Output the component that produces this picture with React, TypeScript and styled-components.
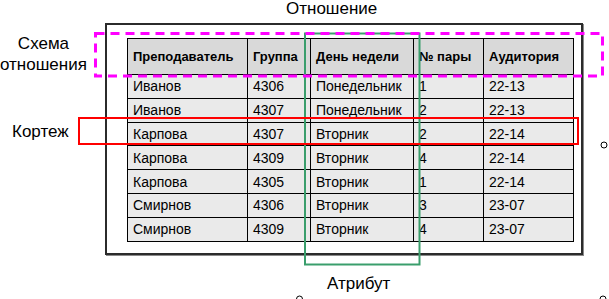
import React from 'react';
import styled, { createGlobalStyle } from 'styled-components';

const GlobalStyle = createGlobalStyle`
	html, body {
		margin: 0;
		padding: 0;
		background: #ffffff;
	}
	body {
		font-family: 'Liberation Sans', Arial, sans-serif;
		color: #000;
	}
`;

const Canvas = styled.div`
	position: relative;
	width: 609px;
	height: 299px;
	overflow: hidden;
	background: #fff;
`;

const Frame = styled.div`
	position: absolute;
	left: 105px;
	top: 23px;
	width: 478px;
	height: 232px;
	box-sizing: border-box;
	border: 2px solid #2b2b2b;
	box-shadow: 1px 1px 0 #8a8a8a;
	padding: 13px 0 0 20px;
`;

const Table = styled.table`
	border-collapse: collapse;
	table-layout: fixed;
	width: 446px;
`;

const Th = styled.th<{ $w: number }>`
	width: ${(p) => p.$w - 6}px;
	height: 35px;
	background: #d9d9d9;
	border: 1px solid #000;
	text-align: left;
	font-size: 13px;
	font-weight: bold;
	padding: 0 0 0 5px;
	white-space: nowrap;
	overflow: hidden;
`;

const Td = styled.td`
	height: 22.8px;
	background: #eaeaea;
	border: 1px solid #000;
	font-size: 14px;
	padding: 0 0 0 5px;
	white-space: nowrap;
	overflow: hidden;
`;

const Label = styled.div<{ $x: number; $y: number; $center?: boolean }>`
	position: absolute;
	left: ${(p) => p.$x}px;
	top: ${(p) => p.$y}px;
	font-size: 17px;
	line-height: 21px;
	text-align: ${(p) => (p.$center ? 'center' : 'left')};
	white-space: nowrap;
`;

const Overlay = styled.svg`
	position: absolute;
	left: 0;
	top: 0;
	pointer-events: none;
`;

const columns = [
	{ title: 'Преподаватель', w: 120 },
	{ title: 'Группа', w: 63 },
	{ title: 'День недели', w: 103 },
	{ title: '№ пары', w: 70 },
	{ title: 'Аудитория', w: 90 },
];

const rows = [
	['Иванов', '4306', 'Понедельник', '1', '22-13'],
	['Иванов', '4307', 'Понедельник', '2', '22-13'],
	['Карпова', '4307', 'Вторник', '2', '22-14'],
	['Карпова', '4309', 'Вторник', '4', '22-14'],
	['Карпова', '4305', 'Вторник', '1', '22-14'],
	['Смирнов', '4306', 'Вторник', '3', '23-07'],
	['Смирнов', '4309', 'Вторник', '4', '23-07'],
];

const App: React.FC = () => {
	return (
		<>
			<GlobalStyle />
			<Canvas>
				<Frame>
					<Table>
						<thead>
							<tr>
								{columns.map((c) => (
									<Th key={c.title} $w={c.w}>
										{c.title}
									</Th>
								))}
							</tr>
						</thead>
						<tbody>
							{rows.map((r, i) => (
								<tr key={i}>
									{r.map((v, j) => (
										<Td key={j}>{v}</Td>
									))}
								</tr>
							))}
						</tbody>
					</Table>
				</Frame>

				<Overlay width={609} height={299}>
					{/* атрибут */}
					<rect x={305} y={33.5} width={114.5} height={231} fill="none" stroke="#3a9e6c" strokeWidth={2} />
					{/* схема отношения */}
					<rect
						x={95.5}
						y={33.5}
						width={507}
						height={42.5}
						fill="none"
						stroke="#ff00ff"
						strokeWidth={3}
						strokeDasharray="9 6"
					/>
					{/* кортеж */}
					<rect x={79} y={118} width={499} height={26} fill="none" stroke="#ff0000" strokeWidth={2} />
					<circle cx={604} cy={145} r={3} fill="#fff" stroke="#000" strokeWidth={1} />
					<circle cx={299.5} cy={299} r={3} fill="#fff" stroke="#000" strokeWidth={1} />
					<circle cx={603} cy={299} r={3} fill="#fff" stroke="#000" strokeWidth={1} />
				</Overlay>

				<Label $x={286} $y={-2}>Отношение</Label>
				<Label $x={0} $y={33} $center>
					Схема
					<br />
					отношения
				</Label>
				<Label $x={12} $y={121}>Кортеж</Label>
				<Label $x={327} $y={273}>Атрибут</Label>
			</Canvas>
		</>
	);
};

export default App;
